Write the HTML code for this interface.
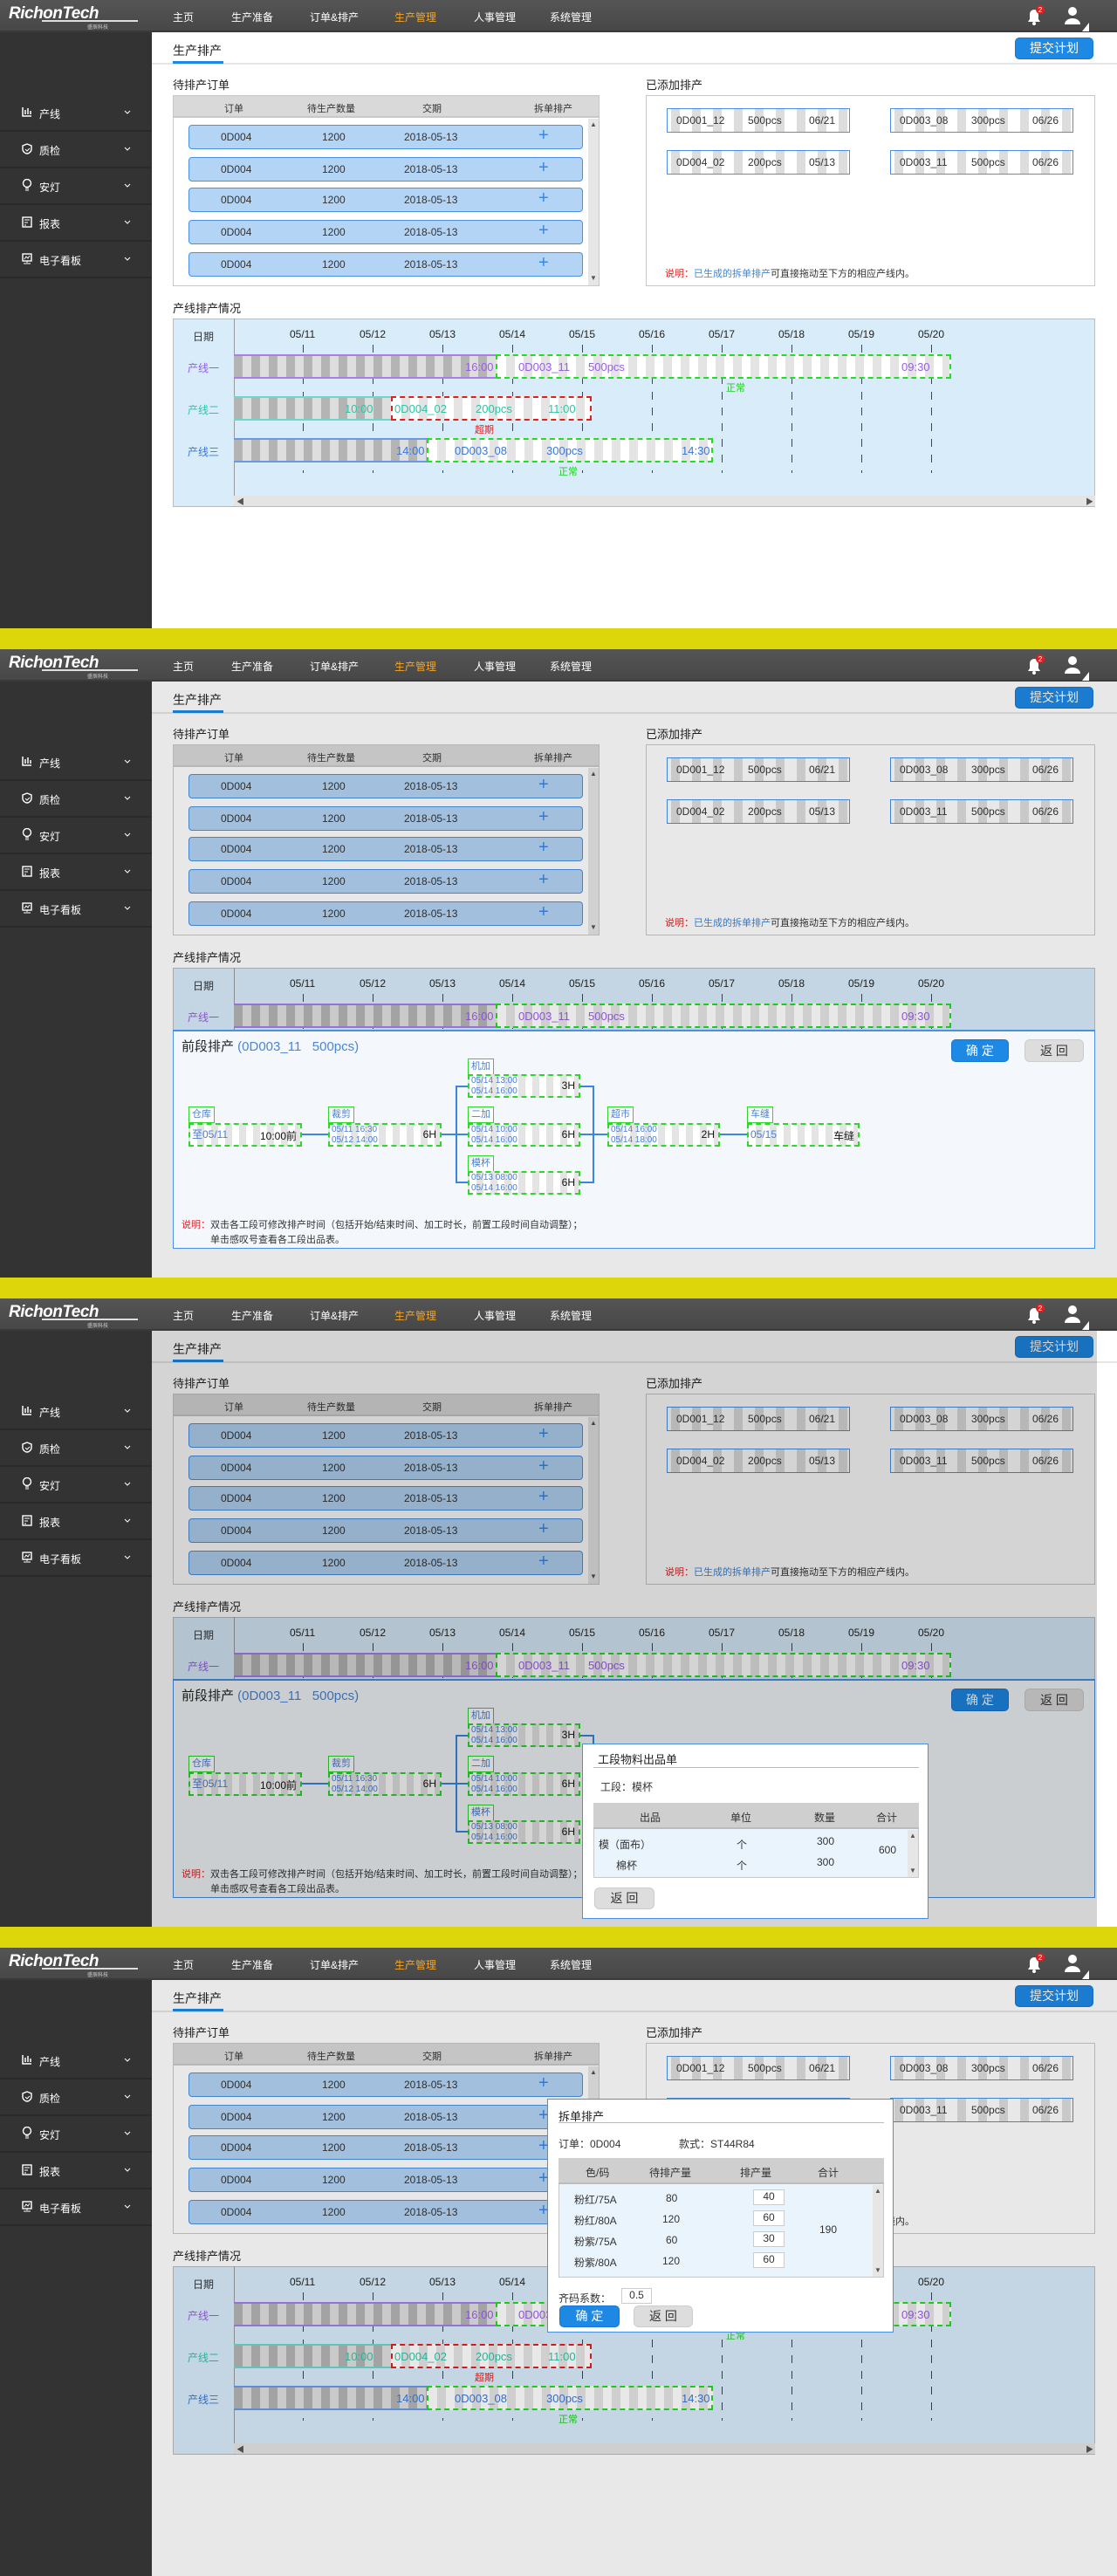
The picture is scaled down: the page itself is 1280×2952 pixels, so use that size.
<!DOCTYPE html>
<html><head><meta charset="utf-8">
<style>
*{box-sizing:border-box;margin:0;padding:0}
body{width:1280px;height:2952px;background:#fff;font-family:"Liberation Sans","Noto Sans CJK SC",sans-serif;font-size:12px;color:#333;overflow:hidden}
.p{position:relative;width:1280px;height:720px;overflow:hidden;background:#fff}
.sep{height:24px;background:#dcd60a}
.a{position:absolute}
.nav{left:0;top:0;width:1280px;height:37px;background:linear-gradient(#555,#474747);border-bottom:2px solid #3a3a3a}
.logo{left:10px;top:5px;color:#fff;font-style:italic;font-weight:bold;font-size:19px;letter-spacing:-0.5px}
.logoline{left:48px;top:23px;width:110px;height:2px;background:#ddd}
.logosub{left:100px;top:26px;color:#ccc;font-size:6px}
.ni{top:11px;color:#fff;font-size:12px}
.side{left:0;top:37px;width:174px;height:683px;background:#333}
.si{left:0;width:174px;height:42px;border-bottom:2px solid #2a2a2a;color:#fff;font-size:12px}
.si span{position:absolute;left:45px;top:13px}
.si svg{position:absolute}
.main{left:174px;top:37px;width:1106px;height:683px;background:#fff}
.t13{font-size:13px;color:#222}
.btn{text-align:center;border-radius:5px;color:#fff;background:#1e88e5;border:1px solid #1976d2}
.gbtn{text-align:center;border-radius:6px;color:#333;background:#ddd;border:1px solid #ccc}
.box{border:1px solid #c8c8c8;background:#fff}
.th{background:#d9d9d9;border-bottom:2px solid #c8c8c8}
.row{left:216px;width:452px;height:28px;background:#b3d4f5;border:1px solid #4a90e2;border-radius:4px;font-size:12px}
.row span{position:absolute;top:6px}
.plus{color:#3a86e0;font-size:20px;top:0!important}
.chip{width:210px;height:28px;border:1px solid #4a90e2;background:repeating-linear-gradient(90deg,#fff 0 4px,#ddd 4px 14px,#fff 14px 24px);font-size:12px}
.chip span{position:absolute;top:6px}
.vs{width:12px;background:#e6e6e6}
.gbox{left:198px;top:365px;width:1057px;height:216px;background:#d8ecfa;border:1px solid #bbb}
.gl{left:268px;top:365px;width:1px;height:216px;background:#999}
.dt{top:376px;font-size:12px;color:#222}
.tick{top:395px;width:1px;height:147px;background:repeating-linear-gradient(#444 0 9px,transparent 9px 18px)}
.gr{height:28px;background:repeating-linear-gradient(90deg,#b4b4b4 0 10px,#dedede 10px 20px)}
.ds{height:28px;background:repeating-linear-gradient(90deg,#fff 0 10px,#e4e4e4 10px 20px)}
.gt{font-size:13px}
.hs{left:268px;top:568px;width:987px;height:12px;background:#e4e4e4}
.det{left:198px;top:436px;width:1057px;height:251px;background:#f4f8fc;border:1px solid #4a90e2;border-top:2px solid #4a90e2}
.lbl{height:19px;padding:0 3px;border:1px solid #2ed62e;color:#4a7fd0;font-size:11px;line-height:17px;background:#fff}
.node{height:27px;border:2px dashed #2ed62e;background:repeating-linear-gradient(90deg,#fff 0 8px,#e4e4e4 8px 16px)}
.node .d{position:absolute;left:2px;top:0;font-size:10px;line-height:12px;color:#4a7fd0}
.node .h{position:absolute;right:4px;top:4px;font-size:12px;color:#111}
.ln{background:#3a86e0}
.pop{background:#fff;border:1px solid #4a90e2}
.inp{border:1px solid #ccc;background:#fff;text-align:center}
</style></head><body>

<!-- ============ PANEL 1 ============ -->
<div class="p">
<div class="a nav"></div>
<div class="a logo">RichonTech</div><div class="a logoline"></div><div class="a logosub">盛辰科技</div>
<div class="a ni" style="left:198px">主页</div><div class="a ni" style="left:265px">生产准备</div><div class="a ni" style="left:355px">订单&amp;排产</div><div class="a ni" style="left:452px;color:#f5a623">生产管理</div><div class="a ni" style="left:543px">人事管理</div><div class="a ni" style="left:630px">系统管理</div>
<svg class="a" style="left:1172px;top:5px" width="26" height="26" viewBox="0 0 26 26"><path d="M6 20h14l-2-3v-6a5 5 0 0 0-10 0v6z" fill="#fff"/><circle cx="13" cy="22" r="2" fill="#fff"/><circle cx="20" cy="6" r="5" fill="#e02020"/><text x="20" y="9" font-size="8" fill="#fff" text-anchor="middle" font-family="Liberation Sans">2</text></svg>
<svg class="a" style="left:1218px;top:6px" width="30" height="30" viewBox="0 0 30 30"><circle cx="11" cy="7" r="5" fill="#fff"/><path d="M2 22a9 7 0 0 1 18 0z" fill="#fff"/><path d="M30 20v10h-8z" fill="#fff"/></svg>
<div class="a side"></div>
<div class="a si" style="top:109px"><svg style="left:25px;top:13px" width="12" height="12"><path d="M1 1v10h10M4 4v5M7 2v7M10 5v4" stroke="#fff" stroke-width="1.5" fill="none"/></svg><span>产线</span><svg style="left:142px;top:17px" width="8" height="6"><path d="M1 1l3 3 3-3" stroke="#fff" fill="none"/></svg></div>
<div class="a si" style="top:151px"><svg style="left:25px;top:13px" width="12" height="13"><path d="M6 1l5 2v4c0 3-3 5-5 5s-5-2-5-5V3z" stroke="#fff" stroke-width="1.4" fill="none"/><path d="M4 7l2 2 3-3" stroke="#fff" fill="none"/></svg><span>质检</span><svg style="left:142px;top:17px" width="8" height="6"><path d="M1 1l3 3 3-3" stroke="#fff" fill="none"/></svg></div>
<div class="a si" style="top:193px"><svg style="left:25px;top:12px" width="12" height="14"><circle cx="6" cy="5" r="4.5" stroke="#fff" stroke-width="1.4" fill="none"/><path d="M4 11h4M4 13h4" stroke="#fff"/></svg><span>安灯</span><svg style="left:142px;top:17px" width="8" height="6"><path d="M1 1l3 3 3-3" stroke="#fff" fill="none"/></svg></div>
<div class="a si" style="top:235px"><svg style="left:25px;top:13px" width="12" height="13"><rect x="1" y="1" width="10" height="11" stroke="#fff" stroke-width="1.4" fill="none"/><path d="M3 4h6M3 7h4M3 10h2" stroke="#fff"/></svg><span>报表</span><svg style="left:142px;top:17px" width="8" height="6"><path d="M1 1l3 3 3-3" stroke="#fff" fill="none"/></svg></div>
<div class="a si" style="top:277px"><svg style="left:25px;top:13px" width="12" height="13"><rect x="1" y="1" width="10" height="8" stroke="#fff" stroke-width="1.4" fill="none"/><path d="M3 7l2-3 2 2 2-3M6 9v2M2 12h8" stroke="#fff" fill="none"/></svg><span>电子看板</span><svg style="left:142px;top:17px" width="8" height="6"><path d="M1 1l3 3 3-3" stroke="#fff" fill="none"/></svg></div>
<div class="a main"></div>
<div class="a" style="left:174px;top:72px;width:1106px;height:2px;background:#e6e6e6"></div>
<div class="a" style="left:198px;top:48px;font-size:14px;color:#222">生产排产</div>
<div class="a" style="left:198px;top:70px;width:58px;height:3px;background:#1e88e5"></div>
<div class="a btn" style="left:1163px;top:43px;width:90px;height:25px;font-size:14px;line-height:23px">提交计划</div>
<div class="a t13" style="left:198px;top:87px">待排产订单</div>
<div class="a t13" style="left:740px;top:87px">已添加排产</div>
<div class="a box" style="left:198px;top:109px;width:489px;height:219px"></div>
<div class="a th" style="left:199px;top:110px;width:487px;height:25px"></div>
<div class="a" style="left:257px;top:116px;font-size:11px">订单</div><div class="a" style="left:352px;top:116px;font-size:11px">待生产数量</div><div class="a" style="left:484px;top:116px;font-size:11px">交期</div><div class="a" style="left:612px;top:116px;font-size:11px">拆单排产</div>
<div class="a vs" style="left:674px;top:136px;height:191px"></div><div class="a" style="left:676px;top:138px;font-size:8px;color:#555">▲</div><div class="a" style="left:676px;top:314px;font-size:8px;color:#555">▼</div>
<div class="a row" style="top:143px"><span style="left:36px">0D004</span><span style="left:152px">1200</span><span style="left:246px">2018-05-13</span><span class="plus" style="left:400px">+</span></div>
<div class="a row" style="top:180px"><span style="left:36px">0D004</span><span style="left:152px">1200</span><span style="left:246px">2018-05-13</span><span class="plus" style="left:400px">+</span></div>
<div class="a row" style="top:215px"><span style="left:36px">0D004</span><span style="left:152px">1200</span><span style="left:246px">2018-05-13</span><span class="plus" style="left:400px">+</span></div>
<div class="a row" style="top:252px"><span style="left:36px">0D004</span><span style="left:152px">1200</span><span style="left:246px">2018-05-13</span><span class="plus" style="left:400px">+</span></div>
<div class="a row" style="top:289px"><span style="left:36px">0D004</span><span style="left:152px">1200</span><span style="left:246px">2018-05-13</span><span class="plus" style="left:400px">+</span></div>
<div class="a box" style="left:740px;top:109px;width:515px;height:219px"></div>
<div class="a chip" style="left:764px;top:124px"><span style="left:10px">0D001_12</span><span style="left:92px">500pcs</span><span style="left:162px">06/21</span></div>
<div class="a chip" style="left:1020px;top:124px"><span style="left:10px">0D003_08</span><span style="left:92px">300pcs</span><span style="left:162px">06/26</span></div>
<div class="a chip" style="left:764px;top:172px"><span style="left:10px">0D004_02</span><span style="left:92px">200pcs</span><span style="left:162px">05/13</span></div>
<div class="a chip" style="left:1020px;top:172px"><span style="left:10px">0D003_11</span><span style="left:92px">500pcs</span><span style="left:162px">06/26</span></div>
<div class="a" style="left:762px;top:305px;font-size:11px"><span style="color:#e02020">说明：</span><span style="color:#3a86e0">已生成的拆单排产</span>可直接拖动至下方的相应产线内。</div>
<div class="a t13" style="left:198px;top:343px">产线排产情况</div>
<div class="a gbox"></div><div class="a gl"></div>
<div class="a" style="left:221px;top:377px">日期</div>
<div class="a dt" style="left:332px">05/11</div><div class="a dt" style="left:412px">05/12</div><div class="a dt" style="left:492px">05/13</div><div class="a dt" style="left:572px">05/14</div><div class="a dt" style="left:652px">05/15</div><div class="a dt" style="left:732px">05/16</div><div class="a dt" style="left:812px">05/17</div><div class="a dt" style="left:892px">05/18</div><div class="a dt" style="left:972px">05/19</div><div class="a dt" style="left:1052px">05/20</div>
<div class="a tick" style="left:347px"></div><div class="a tick" style="left:427px"></div><div class="a tick" style="left:507px"></div><div class="a tick" style="left:587px"></div><div class="a tick" style="left:667px"></div><div class="a tick" style="left:747px"></div><div class="a tick" style="left:827px"></div><div class="a tick" style="left:907px"></div><div class="a tick" style="left:987px"></div><div class="a tick" style="left:1067px"></div>
<div class="a" style="left:215px;top:413px;color:#9b5ce8">产线一</div>
<div class="a" style="left:215px;top:461px;color:#2ec4a8">产线二</div>
<div class="a" style="left:215px;top:509px;color:#3a78d8">产线三</div>
<div class="a gr" style="left:268px;top:406px;width:300px;border-top:2px solid #a87ee8;border-bottom:2px solid #a87ee8"></div>
<div class="a ds" style="left:568px;top:406px;width:522px;border:2px dashed #22dd22"></div>
<div class="a gt" style="left:533px;top:413px;color:#9b5ce8">16:00</div><div class="a gt" style="left:594px;top:413px;color:#9b5ce8">0D003_11</div><div class="a gt" style="left:674px;top:413px;color:#9b5ce8">500pcs</div><div class="a gt" style="left:1033px;top:413px;color:#9b5ce8">09:30</div>
<div class="a" style="left:832px;top:436px;color:#22cc22;font-size:11px">正常</div>
<div class="a gr" style="left:268px;top:454px;width:180px;border-top:2px solid #6cd8c8;border-bottom:2px solid #6cd8c8"></div>
<div class="a ds" style="left:448px;top:454px;width:230px;border:2px dashed #e02020"></div>
<div class="a gt" style="left:395px;top:461px;color:#2ec4a8">10:00</div><div class="a gt" style="left:452px;top:461px;color:#2ec4a8">0D004_02</div><div class="a gt" style="left:545px;top:461px;color:#2ec4a8">200pcs</div><div class="a gt" style="left:628px;top:461px;color:#2ec4a8">11:00</div>
<div class="a" style="left:544px;top:484px;color:#e02020;font-size:11px">超期</div>
<div class="a gr" style="left:268px;top:502px;width:221px;border-top:2px solid #6a9ae6;border-bottom:2px solid #6a9ae6"></div>
<div class="a ds" style="left:489px;top:502px;width:328px;border:2px dashed #22dd22"></div>
<div class="a gt" style="left:454px;top:509px;color:#3a78d8">14:00</div><div class="a gt" style="left:521px;top:509px;color:#3a78d8">0D003_08</div><div class="a gt" style="left:626px;top:509px;color:#3a78d8">300pcs</div><div class="a gt" style="left:781px;top:509px;color:#3a78d8">14:30</div>
<div class="a" style="left:640px;top:532px;color:#22cc22;font-size:11px">正常</div>
<div class="a hs"></div><div class="a" style="left:271px;top:568px;font-size:9px;color:#555">◀</div><div class="a" style="left:1244px;top:568px;font-size:9px;color:#555">▶</div>
</div>
<div class="sep"></div>

<!-- ============ PANEL 2 ============ -->
<div class="p">
<div class="a nav"></div>
<div class="a logo">RichonTech</div><div class="a logoline"></div><div class="a logosub">盛辰科技</div>
<div class="a ni" style="left:198px">主页</div><div class="a ni" style="left:265px">生产准备</div><div class="a ni" style="left:355px">订单&amp;排产</div><div class="a ni" style="left:452px;color:#f5a623">生产管理</div><div class="a ni" style="left:543px">人事管理</div><div class="a ni" style="left:630px">系统管理</div>
<svg class="a" style="left:1172px;top:5px" width="26" height="26" viewBox="0 0 26 26"><path d="M6 20h14l-2-3v-6a5 5 0 0 0-10 0v6z" fill="#fff"/><circle cx="13" cy="22" r="2" fill="#fff"/><circle cx="20" cy="6" r="5" fill="#e02020"/><text x="20" y="9" font-size="8" fill="#fff" text-anchor="middle" font-family="Liberation Sans">2</text></svg>
<svg class="a" style="left:1218px;top:6px" width="30" height="30" viewBox="0 0 30 30"><circle cx="11" cy="7" r="5" fill="#fff"/><path d="M2 22a9 7 0 0 1 18 0z" fill="#fff"/><path d="M30 20v10h-8z" fill="#fff"/></svg>
<div class="a side"></div>
<div class="a si" style="top:109px"><svg style="left:25px;top:13px" width="12" height="12"><path d="M1 1v10h10M4 4v5M7 2v7M10 5v4" stroke="#fff" stroke-width="1.5" fill="none"/></svg><span>产线</span><svg style="left:142px;top:17px" width="8" height="6"><path d="M1 1l3 3 3-3" stroke="#fff" fill="none"/></svg></div>
<div class="a si" style="top:151px"><svg style="left:25px;top:13px" width="12" height="13"><path d="M6 1l5 2v4c0 3-3 5-5 5s-5-2-5-5V3z" stroke="#fff" stroke-width="1.4" fill="none"/><path d="M4 7l2 2 3-3" stroke="#fff" fill="none"/></svg><span>质检</span><svg style="left:142px;top:17px" width="8" height="6"><path d="M1 1l3 3 3-3" stroke="#fff" fill="none"/></svg></div>
<div class="a si" style="top:193px"><svg style="left:25px;top:12px" width="12" height="14"><circle cx="6" cy="5" r="4.5" stroke="#fff" stroke-width="1.4" fill="none"/><path d="M4 11h4M4 13h4" stroke="#fff"/></svg><span>安灯</span><svg style="left:142px;top:17px" width="8" height="6"><path d="M1 1l3 3 3-3" stroke="#fff" fill="none"/></svg></div>
<div class="a si" style="top:235px"><svg style="left:25px;top:13px" width="12" height="13"><rect x="1" y="1" width="10" height="11" stroke="#fff" stroke-width="1.4" fill="none"/><path d="M3 4h6M3 7h4M3 10h2" stroke="#fff"/></svg><span>报表</span><svg style="left:142px;top:17px" width="8" height="6"><path d="M1 1l3 3 3-3" stroke="#fff" fill="none"/></svg></div>
<div class="a si" style="top:277px"><svg style="left:25px;top:13px" width="12" height="13"><rect x="1" y="1" width="10" height="8" stroke="#fff" stroke-width="1.4" fill="none"/><path d="M3 7l2-3 2 2 2-3M6 9v2M2 12h8" stroke="#fff" fill="none"/></svg><span>电子看板</span><svg style="left:142px;top:17px" width="8" height="6"><path d="M1 1l3 3 3-3" stroke="#fff" fill="none"/></svg></div>
<div class="a main"></div>
<div class="a" style="left:174px;top:72px;width:1106px;height:2px;background:#e6e6e6"></div>
<div class="a" style="left:198px;top:48px;font-size:14px;color:#222">生产排产</div>
<div class="a" style="left:198px;top:70px;width:58px;height:3px;background:#1e88e5"></div>
<div class="a btn" style="left:1163px;top:43px;width:90px;height:25px;font-size:14px;line-height:23px">提交计划</div>
<div class="a t13" style="left:198px;top:87px">待排产订单</div>
<div class="a t13" style="left:740px;top:87px">已添加排产</div>
<div class="a box" style="left:198px;top:109px;width:489px;height:219px"></div>
<div class="a th" style="left:199px;top:110px;width:487px;height:25px"></div>
<div class="a" style="left:257px;top:116px;font-size:11px">订单</div><div class="a" style="left:352px;top:116px;font-size:11px">待生产数量</div><div class="a" style="left:484px;top:116px;font-size:11px">交期</div><div class="a" style="left:612px;top:116px;font-size:11px">拆单排产</div>
<div class="a vs" style="left:674px;top:136px;height:191px"></div><div class="a" style="left:676px;top:138px;font-size:8px;color:#555">▲</div><div class="a" style="left:676px;top:314px;font-size:8px;color:#555">▼</div>
<div class="a row" style="top:143px"><span style="left:36px">0D004</span><span style="left:152px">1200</span><span style="left:246px">2018-05-13</span><span class="plus" style="left:400px">+</span></div>
<div class="a row" style="top:180px"><span style="left:36px">0D004</span><span style="left:152px">1200</span><span style="left:246px">2018-05-13</span><span class="plus" style="left:400px">+</span></div>
<div class="a row" style="top:215px"><span style="left:36px">0D004</span><span style="left:152px">1200</span><span style="left:246px">2018-05-13</span><span class="plus" style="left:400px">+</span></div>
<div class="a row" style="top:252px"><span style="left:36px">0D004</span><span style="left:152px">1200</span><span style="left:246px">2018-05-13</span><span class="plus" style="left:400px">+</span></div>
<div class="a row" style="top:289px"><span style="left:36px">0D004</span><span style="left:152px">1200</span><span style="left:246px">2018-05-13</span><span class="plus" style="left:400px">+</span></div>
<div class="a box" style="left:740px;top:109px;width:515px;height:219px"></div>
<div class="a chip" style="left:764px;top:124px"><span style="left:10px">0D001_12</span><span style="left:92px">500pcs</span><span style="left:162px">06/21</span></div>
<div class="a chip" style="left:1020px;top:124px"><span style="left:10px">0D003_08</span><span style="left:92px">300pcs</span><span style="left:162px">06/26</span></div>
<div class="a chip" style="left:764px;top:172px"><span style="left:10px">0D004_02</span><span style="left:92px">200pcs</span><span style="left:162px">05/13</span></div>
<div class="a chip" style="left:1020px;top:172px"><span style="left:10px">0D003_11</span><span style="left:92px">500pcs</span><span style="left:162px">06/26</span></div>
<div class="a" style="left:762px;top:305px;font-size:11px"><span style="color:#e02020">说明：</span><span style="color:#3a86e0">已生成的拆单排产</span>可直接拖动至下方的相应产线内。</div>
<div class="a t13" style="left:198px;top:343px">产线排产情况</div>
<div class="a gbox" style="height:72px"></div><div class="a gl" style="height:72px"></div>
<div class="a" style="left:221px;top:377px">日期</div>
<div class="a dt" style="left:332px">05/11</div><div class="a dt" style="left:412px">05/12</div><div class="a dt" style="left:492px">05/13</div><div class="a dt" style="left:572px">05/14</div><div class="a dt" style="left:652px">05/15</div><div class="a dt" style="left:732px">05/16</div><div class="a dt" style="left:812px">05/17</div><div class="a dt" style="left:892px">05/18</div><div class="a dt" style="left:972px">05/19</div><div class="a dt" style="left:1052px">05/20</div>
<div class="a tick" style="left:347px;height:40px"></div><div class="a tick" style="left:427px;height:40px"></div><div class="a tick" style="left:507px;height:40px"></div><div class="a tick" style="left:587px;height:40px"></div><div class="a tick" style="left:667px;height:40px"></div><div class="a tick" style="left:747px;height:40px"></div><div class="a tick" style="left:827px;height:40px"></div><div class="a tick" style="left:907px;height:40px"></div><div class="a tick" style="left:987px;height:40px"></div><div class="a tick" style="left:1067px;height:40px"></div>
<div class="a" style="left:215px;top:413px;color:#9b5ce8">产线一</div>
<div class="a gr" style="left:268px;top:406px;width:300px;border-top:2px solid #a87ee8;border-bottom:2px solid #a87ee8"></div>
<div class="a ds" style="left:568px;top:406px;width:522px;border:2px dashed #22dd22"></div>
<div class="a gt" style="left:533px;top:413px;color:#9b5ce8">16:00</div><div class="a gt" style="left:594px;top:413px;color:#9b5ce8">0D003_11</div><div class="a gt" style="left:674px;top:413px;color:#9b5ce8">500pcs</div><div class="a gt" style="left:1033px;top:413px;color:#9b5ce8">09:30</div>
<div class="a" style="left:174px;top:37px;width:1106px;height:683px;background:rgba(0,0,0,0.09)"></div>
<div class="a det"></div>
<div class="a" style="left:208px;top:444px;font-size:15px;color:#222">前段排产 <span style="color:#4a86d8">(0D003_11&nbsp;&nbsp;&nbsp;500pcs)</span></div>
<div class="a btn" style="left:1090px;top:447px;width:66px;height:26px;font-size:14px;line-height:24px">确 定</div>
<div class="a gbtn" style="left:1174px;top:447px;width:68px;height:26px;font-size:14px;line-height:24px">返 回</div>
<div class="a ln" style="left:346px;top:555px;width:30px;height:2px"></div>
<div class="a ln" style="left:506px;top:555px;width:30px;height:2px"></div>
<div class="a ln" style="left:522px;top:500px;width:2px;height:112px"></div>
<div class="a ln" style="left:522px;top:500px;width:14px;height:2px"></div><div class="a ln" style="left:522px;top:610px;width:14px;height:2px"></div>
<div class="a ln" style="left:679px;top:500px;width:2px;height:112px"></div>
<div class="a ln" style="left:665px;top:500px;width:14px;height:2px"></div><div class="a ln" style="left:665px;top:610px;width:14px;height:2px"></div>
<div class="a ln" style="left:665px;top:555px;width:31px;height:2px"></div>
<div class="a ln" style="left:825px;top:555px;width:31px;height:2px"></div>
<div class="a lbl" style="left:216px;top:524px">仓库</div><div class="a node" style="left:216px;top:543px;width:130px"><div class="d" style="font-size:12px;top:5px">至05/11</div><div class="h">10:00前</div></div>
<div class="a lbl" style="left:376px;top:524px">裁剪</div><div class="a node" style="left:376px;top:543px;width:130px"><div class="d">05/11 16:30<br>05/12 14:00</div><div class="h">6H</div></div>
<div class="a lbl" style="left:536px;top:469px">机加</div><div class="a node" style="left:536px;top:487px;width:129px"><div class="d">05/14 13:00<br>05/14 16:00</div><div class="h">3H</div></div>
<div class="a lbl" style="left:536px;top:524px">二加</div><div class="a node" style="left:536px;top:543px;width:129px"><div class="d">05/14 10:00<br>05/14 16:00</div><div class="h">6H</div></div>
<div class="a lbl" style="left:536px;top:580px">模杯</div><div class="a node" style="left:536px;top:598px;width:129px"><div class="d">05/13 08:00<br>05/14 16:00</div><div class="h">6H</div></div>
<div class="a lbl" style="left:696px;top:524px">超市</div><div class="a node" style="left:696px;top:543px;width:129px"><div class="d">05/14 16:00<br>05/14 18:00</div><div class="h">2H</div></div>
<div class="a lbl" style="left:856px;top:524px">车缝</div><div class="a node" style="left:856px;top:543px;width:129px"><div class="d" style="font-size:12px;top:5px">05/15</div><div class="h">车缝</div></div>
<div class="a" style="left:208px;top:651px;font-size:11px"><span style="color:#e02020">说明：</span>双击各工段可修改排产时间（包括开始/结束时间、加工时长，前置工段时间自动调整）；</div>
<div class="a" style="left:241px;top:668px;font-size:11px">单击感叹号查看各工段出品表。</div>
</div>
<div class="sep"></div>

<!-- ============ PANEL 3 ============ -->
<div class="p">
<div class="a nav"></div>
<div class="a logo">RichonTech</div><div class="a logoline"></div><div class="a logosub">盛辰科技</div>
<div class="a ni" style="left:198px">主页</div><div class="a ni" style="left:265px">生产准备</div><div class="a ni" style="left:355px">订单&amp;排产</div><div class="a ni" style="left:452px;color:#f5a623">生产管理</div><div class="a ni" style="left:543px">人事管理</div><div class="a ni" style="left:630px">系统管理</div>
<svg class="a" style="left:1172px;top:5px" width="26" height="26" viewBox="0 0 26 26"><path d="M6 20h14l-2-3v-6a5 5 0 0 0-10 0v6z" fill="#fff"/><circle cx="13" cy="22" r="2" fill="#fff"/><circle cx="20" cy="6" r="5" fill="#e02020"/><text x="20" y="9" font-size="8" fill="#fff" text-anchor="middle" font-family="Liberation Sans">2</text></svg>
<svg class="a" style="left:1218px;top:6px" width="30" height="30" viewBox="0 0 30 30"><circle cx="11" cy="7" r="5" fill="#fff"/><path d="M2 22a9 7 0 0 1 18 0z" fill="#fff"/><path d="M30 20v10h-8z" fill="#fff"/></svg>
<div class="a side"></div>
<div class="a si" style="top:109px"><svg style="left:25px;top:13px" width="12" height="12"><path d="M1 1v10h10M4 4v5M7 2v7M10 5v4" stroke="#fff" stroke-width="1.5" fill="none"/></svg><span>产线</span><svg style="left:142px;top:17px" width="8" height="6"><path d="M1 1l3 3 3-3" stroke="#fff" fill="none"/></svg></div>
<div class="a si" style="top:151px"><svg style="left:25px;top:13px" width="12" height="13"><path d="M6 1l5 2v4c0 3-3 5-5 5s-5-2-5-5V3z" stroke="#fff" stroke-width="1.4" fill="none"/><path d="M4 7l2 2 3-3" stroke="#fff" fill="none"/></svg><span>质检</span><svg style="left:142px;top:17px" width="8" height="6"><path d="M1 1l3 3 3-3" stroke="#fff" fill="none"/></svg></div>
<div class="a si" style="top:193px"><svg style="left:25px;top:12px" width="12" height="14"><circle cx="6" cy="5" r="4.5" stroke="#fff" stroke-width="1.4" fill="none"/><path d="M4 11h4M4 13h4" stroke="#fff"/></svg><span>安灯</span><svg style="left:142px;top:17px" width="8" height="6"><path d="M1 1l3 3 3-3" stroke="#fff" fill="none"/></svg></div>
<div class="a si" style="top:235px"><svg style="left:25px;top:13px" width="12" height="13"><rect x="1" y="1" width="10" height="11" stroke="#fff" stroke-width="1.4" fill="none"/><path d="M3 4h6M3 7h4M3 10h2" stroke="#fff"/></svg><span>报表</span><svg style="left:142px;top:17px" width="8" height="6"><path d="M1 1l3 3 3-3" stroke="#fff" fill="none"/></svg></div>
<div class="a si" style="top:277px"><svg style="left:25px;top:13px" width="12" height="13"><rect x="1" y="1" width="10" height="8" stroke="#fff" stroke-width="1.4" fill="none"/><path d="M3 7l2-3 2 2 2-3M6 9v2M2 12h8" stroke="#fff" fill="none"/></svg><span>电子看板</span><svg style="left:142px;top:17px" width="8" height="6"><path d="M1 1l3 3 3-3" stroke="#fff" fill="none"/></svg></div>
<div class="a main"></div>
<div class="a" style="left:174px;top:72px;width:1106px;height:2px;background:#e6e6e6"></div>
<div class="a" style="left:198px;top:48px;font-size:14px;color:#222">生产排产</div>
<div class="a" style="left:198px;top:70px;width:58px;height:3px;background:#1e88e5"></div>
<div class="a btn" style="left:1163px;top:43px;width:90px;height:25px;font-size:14px;line-height:23px">提交计划</div>
<div class="a t13" style="left:198px;top:87px">待排产订单</div>
<div class="a t13" style="left:740px;top:87px">已添加排产</div>
<div class="a box" style="left:198px;top:109px;width:489px;height:219px"></div>
<div class="a th" style="left:199px;top:110px;width:487px;height:25px"></div>
<div class="a" style="left:257px;top:116px;font-size:11px">订单</div><div class="a" style="left:352px;top:116px;font-size:11px">待生产数量</div><div class="a" style="left:484px;top:116px;font-size:11px">交期</div><div class="a" style="left:612px;top:116px;font-size:11px">拆单排产</div>
<div class="a vs" style="left:674px;top:136px;height:191px"></div><div class="a" style="left:676px;top:138px;font-size:8px;color:#555">▲</div><div class="a" style="left:676px;top:314px;font-size:8px;color:#555">▼</div>
<div class="a row" style="top:143px"><span style="left:36px">0D004</span><span style="left:152px">1200</span><span style="left:246px">2018-05-13</span><span class="plus" style="left:400px">+</span></div>
<div class="a row" style="top:180px"><span style="left:36px">0D004</span><span style="left:152px">1200</span><span style="left:246px">2018-05-13</span><span class="plus" style="left:400px">+</span></div>
<div class="a row" style="top:215px"><span style="left:36px">0D004</span><span style="left:152px">1200</span><span style="left:246px">2018-05-13</span><span class="plus" style="left:400px">+</span></div>
<div class="a row" style="top:252px"><span style="left:36px">0D004</span><span style="left:152px">1200</span><span style="left:246px">2018-05-13</span><span class="plus" style="left:400px">+</span></div>
<div class="a row" style="top:289px"><span style="left:36px">0D004</span><span style="left:152px">1200</span><span style="left:246px">2018-05-13</span><span class="plus" style="left:400px">+</span></div>
<div class="a box" style="left:740px;top:109px;width:515px;height:219px"></div>
<div class="a chip" style="left:764px;top:124px"><span style="left:10px">0D001_12</span><span style="left:92px">500pcs</span><span style="left:162px">06/21</span></div>
<div class="a chip" style="left:1020px;top:124px"><span style="left:10px">0D003_08</span><span style="left:92px">300pcs</span><span style="left:162px">06/26</span></div>
<div class="a chip" style="left:764px;top:172px"><span style="left:10px">0D004_02</span><span style="left:92px">200pcs</span><span style="left:162px">05/13</span></div>
<div class="a chip" style="left:1020px;top:172px"><span style="left:10px">0D003_11</span><span style="left:92px">500pcs</span><span style="left:162px">06/26</span></div>
<div class="a" style="left:762px;top:305px;font-size:11px"><span style="color:#e02020">说明：</span><span style="color:#3a86e0">已生成的拆单排产</span>可直接拖动至下方的相应产线内。</div>
<div class="a t13" style="left:198px;top:343px">产线排产情况</div>
<div class="a gbox" style="height:72px"></div><div class="a gl" style="height:72px"></div>
<div class="a" style="left:221px;top:377px">日期</div>
<div class="a dt" style="left:332px">05/11</div><div class="a dt" style="left:412px">05/12</div><div class="a dt" style="left:492px">05/13</div><div class="a dt" style="left:572px">05/14</div><div class="a dt" style="left:652px">05/15</div><div class="a dt" style="left:732px">05/16</div><div class="a dt" style="left:812px">05/17</div><div class="a dt" style="left:892px">05/18</div><div class="a dt" style="left:972px">05/19</div><div class="a dt" style="left:1052px">05/20</div>
<div class="a tick" style="left:347px;height:40px"></div><div class="a tick" style="left:427px;height:40px"></div><div class="a tick" style="left:507px;height:40px"></div><div class="a tick" style="left:587px;height:40px"></div><div class="a tick" style="left:667px;height:40px"></div><div class="a tick" style="left:747px;height:40px"></div><div class="a tick" style="left:827px;height:40px"></div><div class="a tick" style="left:907px;height:40px"></div><div class="a tick" style="left:987px;height:40px"></div><div class="a tick" style="left:1067px;height:40px"></div>
<div class="a" style="left:215px;top:413px;color:#9b5ce8">产线一</div>
<div class="a gr" style="left:268px;top:406px;width:300px;border-top:2px solid #a87ee8;border-bottom:2px solid #a87ee8"></div>
<div class="a ds" style="left:568px;top:406px;width:522px;border:2px dashed #22dd22"></div>
<div class="a gt" style="left:533px;top:413px;color:#9b5ce8">16:00</div><div class="a gt" style="left:594px;top:413px;color:#9b5ce8">0D003_11</div><div class="a gt" style="left:674px;top:413px;color:#9b5ce8">500pcs</div><div class="a gt" style="left:1033px;top:413px;color:#9b5ce8">09:30</div>
<div class="a det"></div>
<div class="a" style="left:208px;top:444px;font-size:15px;color:#222">前段排产 <span style="color:#4a86d8">(0D003_11&nbsp;&nbsp;&nbsp;500pcs)</span></div>
<div class="a btn" style="left:1090px;top:447px;width:66px;height:26px;font-size:14px;line-height:24px">确 定</div>
<div class="a gbtn" style="left:1174px;top:447px;width:68px;height:26px;font-size:14px;line-height:24px">返 回</div>
<div class="a ln" style="left:346px;top:555px;width:30px;height:2px"></div>
<div class="a ln" style="left:506px;top:555px;width:30px;height:2px"></div>
<div class="a ln" style="left:522px;top:500px;width:2px;height:112px"></div>
<div class="a ln" style="left:522px;top:500px;width:14px;height:2px"></div><div class="a ln" style="left:522px;top:610px;width:14px;height:2px"></div>
<div class="a ln" style="left:679px;top:500px;width:2px;height:112px"></div>
<div class="a ln" style="left:665px;top:500px;width:14px;height:2px"></div>
<div class="a lbl" style="left:216px;top:524px">仓库</div><div class="a node" style="left:216px;top:543px;width:130px"><div class="d" style="font-size:12px;top:5px">至05/11</div><div class="h">10:00前</div></div>
<div class="a lbl" style="left:376px;top:524px">裁剪</div><div class="a node" style="left:376px;top:543px;width:130px"><div class="d">05/11 16:30<br>05/12 14:00</div><div class="h">6H</div></div>
<div class="a lbl" style="left:536px;top:469px">机加</div><div class="a node" style="left:536px;top:487px;width:129px"><div class="d">05/14 13:00<br>05/14 16:00</div><div class="h">3H</div></div>
<div class="a lbl" style="left:536px;top:524px">二加</div><div class="a node" style="left:536px;top:543px;width:129px"><div class="d">05/14 10:00<br>05/14 16:00</div><div class="h">6H</div></div>
<div class="a lbl" style="left:536px;top:580px">模杯</div><div class="a node" style="left:536px;top:598px;width:129px"><div class="d">05/13 08:00<br>05/14 16:00</div><div class="h">6H</div></div>
<div class="a" style="left:208px;top:651px;font-size:11px"><span style="color:#e02020">说明：</span>双击各工段可修改排产时间（包括开始/结束时间、加工时长，前置工段时间自动调整）；</div>
<div class="a" style="left:241px;top:668px;font-size:11px">单击感叹号查看各工段出品表。</div>
<div class="a" style="left:174px;top:37px;width:1083px;height:683px;background:rgba(0,0,0,0.17)"></div>
<div class="a pop" style="left:667px;top:510px;width:397px;height:201px">
 <div class="a" style="left:17px;top:7px;font-size:13px;color:#222">工段物料出品单</div>
 <div class="a" style="left:12px;top:26px;width:373px;height:1px;background:#bbb"></div>
 <div class="a" style="left:20px;top:40px;font-size:12px">工段：模杯</div>
 <div class="a" style="left:12px;top:67px;width:373px;height:86px;border:1px solid #c8c8c8;background:#eaf4fd"></div>
 <div class="a" style="left:12px;top:67px;width:373px;height:30px;background:#cfcfcf;border-bottom:2px solid #bbb"></div>
 <div class="a" style="left:65px;top:75px">出品</div><div class="a" style="left:169px;top:75px">单位</div><div class="a" style="left:265px;top:75px">数量</div><div class="a" style="left:336px;top:75px">合计</div>
 <div class="a vs" style="left:372px;top:98px;height:54px"></div><div class="a" style="left:374px;top:100px;font-size:8px;color:#555">▲</div><div class="a" style="left:374px;top:140px;font-size:8px;color:#555">▼</div>
 <div class="a" style="left:18px;top:106px">模（面布）</div><div class="a" style="left:176px;top:106px">个</div><div class="a" style="left:268px;top:104px">300</div><div class="a" style="left:339px;top:114px">600</div>
 <div class="a" style="left:38px;top:130px">棉杯</div><div class="a" style="left:176px;top:130px">个</div><div class="a" style="left:268px;top:128px">300</div>
 <div class="a gbtn" style="left:13px;top:164px;width:69px;height:25px;font-size:14px;line-height:23px">返 回</div>
</div>
</div>
<div class="sep"></div>

<!-- ============ PANEL 4 ============ -->
<div class="p">
<div class="a nav"></div>
<div class="a logo">RichonTech</div><div class="a logoline"></div><div class="a logosub">盛辰科技</div>
<div class="a ni" style="left:198px">主页</div><div class="a ni" style="left:265px">生产准备</div><div class="a ni" style="left:355px">订单&amp;排产</div><div class="a ni" style="left:452px;color:#f5a623">生产管理</div><div class="a ni" style="left:543px">人事管理</div><div class="a ni" style="left:630px">系统管理</div>
<svg class="a" style="left:1172px;top:5px" width="26" height="26" viewBox="0 0 26 26"><path d="M6 20h14l-2-3v-6a5 5 0 0 0-10 0v6z" fill="#fff"/><circle cx="13" cy="22" r="2" fill="#fff"/><circle cx="20" cy="6" r="5" fill="#e02020"/><text x="20" y="9" font-size="8" fill="#fff" text-anchor="middle" font-family="Liberation Sans">2</text></svg>
<svg class="a" style="left:1218px;top:6px" width="30" height="30" viewBox="0 0 30 30"><circle cx="11" cy="7" r="5" fill="#fff"/><path d="M2 22a9 7 0 0 1 18 0z" fill="#fff"/><path d="M30 20v10h-8z" fill="#fff"/></svg>
<div class="a side"></div>
<div class="a si" style="top:109px"><svg style="left:25px;top:13px" width="12" height="12"><path d="M1 1v10h10M4 4v5M7 2v7M10 5v4" stroke="#fff" stroke-width="1.5" fill="none"/></svg><span>产线</span><svg style="left:142px;top:17px" width="8" height="6"><path d="M1 1l3 3 3-3" stroke="#fff" fill="none"/></svg></div>
<div class="a si" style="top:151px"><svg style="left:25px;top:13px" width="12" height="13"><path d="M6 1l5 2v4c0 3-3 5-5 5s-5-2-5-5V3z" stroke="#fff" stroke-width="1.4" fill="none"/><path d="M4 7l2 2 3-3" stroke="#fff" fill="none"/></svg><span>质检</span><svg style="left:142px;top:17px" width="8" height="6"><path d="M1 1l3 3 3-3" stroke="#fff" fill="none"/></svg></div>
<div class="a si" style="top:193px"><svg style="left:25px;top:12px" width="12" height="14"><circle cx="6" cy="5" r="4.5" stroke="#fff" stroke-width="1.4" fill="none"/><path d="M4 11h4M4 13h4" stroke="#fff"/></svg><span>安灯</span><svg style="left:142px;top:17px" width="8" height="6"><path d="M1 1l3 3 3-3" stroke="#fff" fill="none"/></svg></div>
<div class="a si" style="top:235px"><svg style="left:25px;top:13px" width="12" height="13"><rect x="1" y="1" width="10" height="11" stroke="#fff" stroke-width="1.4" fill="none"/><path d="M3 4h6M3 7h4M3 10h2" stroke="#fff"/></svg><span>报表</span><svg style="left:142px;top:17px" width="8" height="6"><path d="M1 1l3 3 3-3" stroke="#fff" fill="none"/></svg></div>
<div class="a si" style="top:277px"><svg style="left:25px;top:13px" width="12" height="13"><rect x="1" y="1" width="10" height="8" stroke="#fff" stroke-width="1.4" fill="none"/><path d="M3 7l2-3 2 2 2-3M6 9v2M2 12h8" stroke="#fff" fill="none"/></svg><span>电子看板</span><svg style="left:142px;top:17px" width="8" height="6"><path d="M1 1l3 3 3-3" stroke="#fff" fill="none"/></svg></div>
<div class="a main"></div>
<div class="a" style="left:174px;top:72px;width:1106px;height:2px;background:#e6e6e6"></div>
<div class="a" style="left:198px;top:48px;font-size:14px;color:#222">生产排产</div>
<div class="a" style="left:198px;top:70px;width:58px;height:3px;background:#1e88e5"></div>
<div class="a btn" style="left:1163px;top:43px;width:90px;height:25px;font-size:14px;line-height:23px">提交计划</div>
<div class="a t13" style="left:198px;top:87px">待排产订单</div>
<div class="a t13" style="left:740px;top:87px">已添加排产</div>
<div class="a box" style="left:198px;top:109px;width:489px;height:219px"></div>
<div class="a th" style="left:199px;top:110px;width:487px;height:25px"></div>
<div class="a" style="left:257px;top:116px;font-size:11px">订单</div><div class="a" style="left:352px;top:116px;font-size:11px">待生产数量</div><div class="a" style="left:484px;top:116px;font-size:11px">交期</div><div class="a" style="left:612px;top:116px;font-size:11px">拆单排产</div>
<div class="a vs" style="left:674px;top:136px;height:191px"></div><div class="a" style="left:676px;top:138px;font-size:8px;color:#555">▲</div><div class="a" style="left:676px;top:314px;font-size:8px;color:#555">▼</div>
<div class="a row" style="top:143px"><span style="left:36px">0D004</span><span style="left:152px">1200</span><span style="left:246px">2018-05-13</span><span class="plus" style="left:400px">+</span></div>
<div class="a row" style="top:180px"><span style="left:36px">0D004</span><span style="left:152px">1200</span><span style="left:246px">2018-05-13</span><span class="plus" style="left:400px">+</span></div>
<div class="a row" style="top:215px"><span style="left:36px">0D004</span><span style="left:152px">1200</span><span style="left:246px">2018-05-13</span><span class="plus" style="left:400px">+</span></div>
<div class="a row" style="top:252px"><span style="left:36px">0D004</span><span style="left:152px">1200</span><span style="left:246px">2018-05-13</span><span class="plus" style="left:400px">+</span></div>
<div class="a row" style="top:289px"><span style="left:36px">0D004</span><span style="left:152px">1200</span><span style="left:246px">2018-05-13</span><span class="plus" style="left:400px">+</span></div>
<div class="a box" style="left:740px;top:109px;width:515px;height:219px"></div>
<div class="a chip" style="left:764px;top:124px"><span style="left:10px">0D001_12</span><span style="left:92px">500pcs</span><span style="left:162px">06/21</span></div>
<div class="a chip" style="left:1020px;top:124px"><span style="left:10px">0D003_08</span><span style="left:92px">300pcs</span><span style="left:162px">06/26</span></div>
<div class="a chip" style="left:764px;top:172px"><span style="left:10px">0D004_02</span><span style="left:92px">200pcs</span><span style="left:162px">05/13</span></div>
<div class="a chip" style="left:1020px;top:172px"><span style="left:10px">0D003_11</span><span style="left:92px">500pcs</span><span style="left:162px">06/26</span></div>
<div class="a" style="left:762px;top:305px;font-size:11px"><span style="color:#e02020">说明：</span><span style="color:#3a86e0">已生成的拆单排产</span>可直接拖动至下方的相应产线内。</div>
<div class="a t13" style="left:198px;top:343px">产线排产情况</div>
<div class="a gbox"></div><div class="a gl"></div>
<div class="a" style="left:221px;top:377px">日期</div>
<div class="a dt" style="left:332px">05/11</div><div class="a dt" style="left:412px">05/12</div><div class="a dt" style="left:492px">05/13</div><div class="a dt" style="left:572px">05/14</div><div class="a dt" style="left:652px">05/15</div><div class="a dt" style="left:732px">05/16</div><div class="a dt" style="left:812px">05/17</div><div class="a dt" style="left:892px">05/18</div><div class="a dt" style="left:972px">05/19</div><div class="a dt" style="left:1052px">05/20</div>
<div class="a tick" style="left:347px"></div><div class="a tick" style="left:427px"></div><div class="a tick" style="left:507px"></div><div class="a tick" style="left:587px"></div><div class="a tick" style="left:667px"></div><div class="a tick" style="left:747px"></div><div class="a tick" style="left:827px"></div><div class="a tick" style="left:907px"></div><div class="a tick" style="left:987px"></div><div class="a tick" style="left:1067px"></div>
<div class="a" style="left:215px;top:413px;color:#9b5ce8">产线一</div>
<div class="a" style="left:215px;top:461px;color:#2ec4a8">产线二</div>
<div class="a" style="left:215px;top:509px;color:#3a78d8">产线三</div>
<div class="a gr" style="left:268px;top:406px;width:300px;border-top:2px solid #a87ee8;border-bottom:2px solid #a87ee8"></div>
<div class="a ds" style="left:568px;top:406px;width:522px;border:2px dashed #22dd22"></div>
<div class="a gt" style="left:533px;top:413px;color:#9b5ce8">16:00</div><div class="a gt" style="left:594px;top:413px;color:#9b5ce8">0D003_11</div><div class="a gt" style="left:674px;top:413px;color:#9b5ce8">500pcs</div><div class="a gt" style="left:1033px;top:413px;color:#9b5ce8">09:30</div>
<div class="a" style="left:832px;top:436px;color:#22cc22;font-size:11px">正常</div>
<div class="a gr" style="left:268px;top:454px;width:180px;border-top:2px solid #6cd8c8;border-bottom:2px solid #6cd8c8"></div>
<div class="a ds" style="left:448px;top:454px;width:230px;border:2px dashed #e02020"></div>
<div class="a gt" style="left:395px;top:461px;color:#2ec4a8">10:00</div><div class="a gt" style="left:452px;top:461px;color:#2ec4a8">0D004_02</div><div class="a gt" style="left:545px;top:461px;color:#2ec4a8">200pcs</div><div class="a gt" style="left:628px;top:461px;color:#2ec4a8">11:00</div>
<div class="a" style="left:544px;top:484px;color:#e02020;font-size:11px">超期</div>
<div class="a gr" style="left:268px;top:502px;width:221px;border-top:2px solid #6a9ae6;border-bottom:2px solid #6a9ae6"></div>
<div class="a ds" style="left:489px;top:502px;width:328px;border:2px dashed #22dd22"></div>
<div class="a gt" style="left:454px;top:509px;color:#3a78d8">14:00</div><div class="a gt" style="left:521px;top:509px;color:#3a78d8">0D003_08</div><div class="a gt" style="left:626px;top:509px;color:#3a78d8">300pcs</div><div class="a gt" style="left:781px;top:509px;color:#3a78d8">14:30</div>
<div class="a" style="left:640px;top:532px;color:#22cc22;font-size:11px">正常</div>
<div class="a hs"></div><div class="a" style="left:271px;top:568px;font-size:9px;color:#555">◀</div><div class="a" style="left:1244px;top:568px;font-size:9px;color:#555">▶</div>
<div class="a" style="left:174px;top:37px;width:1106px;height:683px;background:rgba(0,0,0,0.09)"></div>
<div class="a pop" style="left:627px;top:173px;width:397px;height:268px">
 <div class="a" style="left:12px;top:9px;font-size:13px;color:#222">拆单排产</div>
 <div class="a" style="left:12px;top:26px;width:373px;height:1px;background:#bbb"></div>
 <div class="a" style="left:12px;top:42px;font-size:12px">订单：0D004</div>
 <div class="a" style="left:150px;top:42px;font-size:12px">款式：ST44R84</div>
 <div class="a" style="left:12px;top:67px;width:373px;height:137px;border:1px solid #c8c8c8;background:#eaf4fd"></div>
 <div class="a" style="left:12px;top:67px;width:373px;height:30px;background:#cfcfcf;border-bottom:2px solid #bbb"></div>
 <div class="a" style="left:43px;top:75px">色/码</div><div class="a" style="left:116px;top:75px">待排产量</div><div class="a" style="left:220px;top:75px">排产量</div><div class="a" style="left:309px;top:75px">合计</div>
 <div class="a vs" style="left:372px;top:98px;height:105px"></div><div class="a" style="left:374px;top:100px;font-size:8px;color:#555">▲</div><div class="a" style="left:374px;top:191px;font-size:8px;color:#555">▼</div>
 <div class="a" style="left:30px;top:106px">粉红/75A</div><div class="a" style="left:135px;top:106px">80</div><div class="a inp" style="left:235px;top:103px;width:36px;height:18px">40</div>
 <div class="a" style="left:30px;top:130px">粉红/80A</div><div class="a" style="left:131px;top:130px">120</div><div class="a inp" style="left:235px;top:127px;width:36px;height:18px">60</div>
 <div class="a" style="left:30px;top:154px">粉紫/75A</div><div class="a" style="left:135px;top:154px">60</div><div class="a inp" style="left:235px;top:151px;width:36px;height:18px">30</div>
 <div class="a" style="left:30px;top:178px">粉紫/80A</div><div class="a" style="left:131px;top:178px">120</div><div class="a inp" style="left:235px;top:175px;width:36px;height:18px">60</div>
 <div class="a" style="left:311px;top:142px">190</div>
 <div class="a" style="left:12px;top:219px">齐码系数：</div><div class="a inp" style="left:84px;top:216px;width:35px;height:18px">0.5</div>
 <div class="a btn" style="left:13px;top:236px;width:69px;height:25px;font-size:14px;line-height:23px">确 定</div>
 <div class="a gbtn" style="left:98px;top:236px;width:68px;height:25px;font-size:14px;line-height:23px">返 回</div>
</div>
</div>

</body></html>
